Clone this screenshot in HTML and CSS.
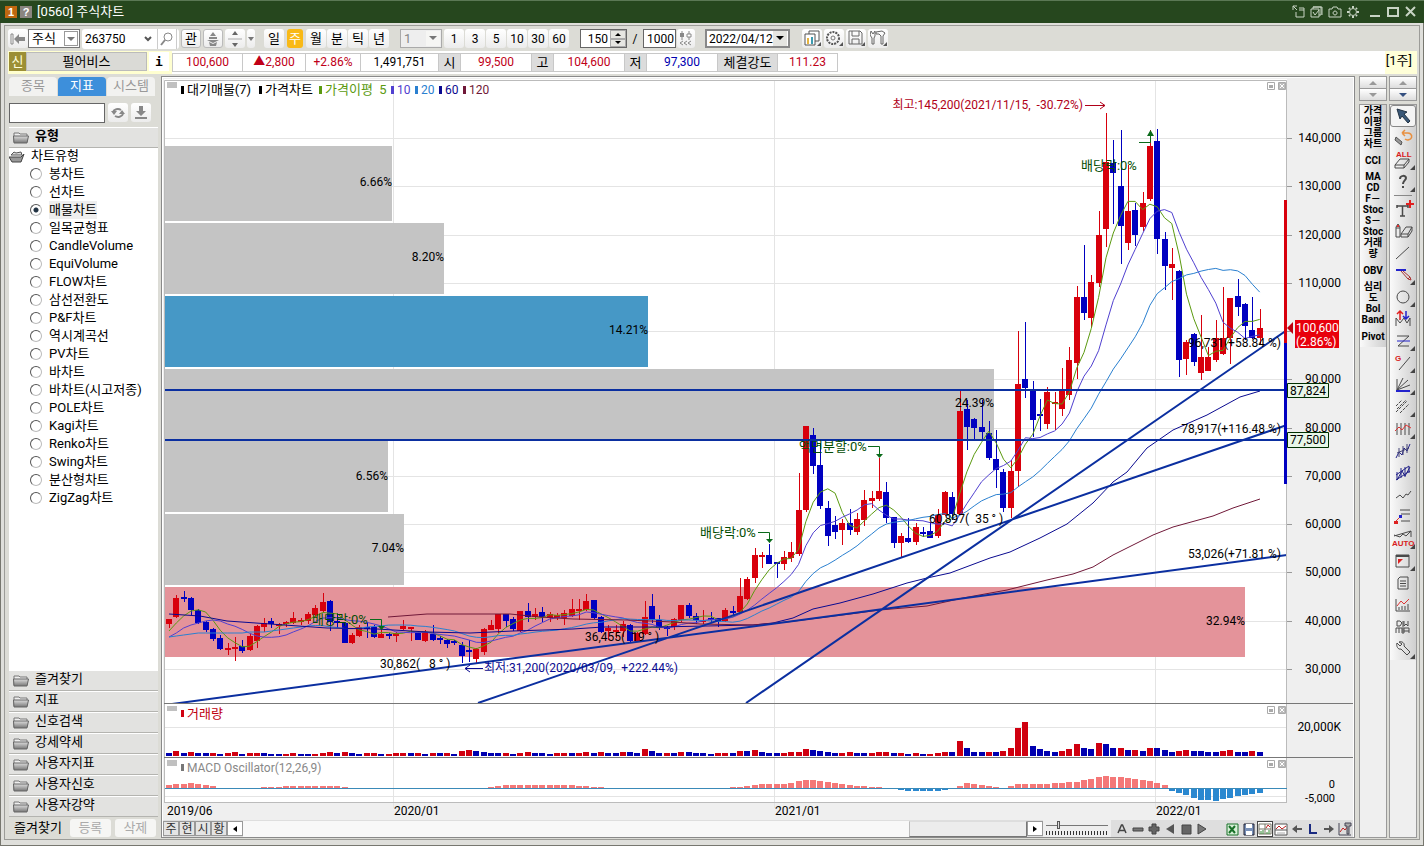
FILE: index.html
```html
<!DOCTYPE html>
<html lang="ko">
<head>
<meta charset="utf-8">
<title>[0560] 주식차트</title>
<link rel="stylesheet" href="styles.css">
</head>
<body>
<div class="window">
<header class="titlebar">
  <span class="badge badge-num">1</span><span class="badge badge-help">?</span>
  <h1 class="title">[0560] 주식차트</h1>
  <div class="title-tools">
    <button class="tbtn" aria-label="분리"><svg width="14" height="14"><path d="M1 1l4 4M1 5V1h4M4 7v5h8V3H7M7 5h5"/></svg></button>
    <button class="tbtn" aria-label="복사"><svg width="14" height="14"><path d="M1 4h8v8H1zM3 4V2h8v8H9M3 2h9v8M3 7l2 3 4-5" /></svg></button>
    <button class="tbtn" aria-label="화면 캡처"><svg width="14" height="14"><path d="M1 4h3l1-2h4l1 2h3v8H1zM7 6a2 2 0 1 0 .1 0z"/></svg></button>
    <button class="tbtn" aria-label="설정"><svg width="14" height="14"><circle cx="7" cy="7" r="3.5"/><path d="M7 1v2M7 11v2M1 7h2M11 7h2M3 3l1 1M10 10l1 1M3 11l1-1M10 4l1-1" stroke-width="2"/></svg></button>
    <span class="title-gap"></span>
    <button class="tbtn" aria-label="최소화"><svg width="14" height="14"><path d="M2 11h10" stroke-width="2"/></svg></button>
    <button class="tbtn" aria-label="최대화"><svg width="14" height="14"><path d="M2 3h10v8H2z" stroke-width="2"/></svg></button>
    <button class="tbtn" aria-label="닫기"><svg width="14" height="14"><path d="M2 2l9 9M11 2l-9 9" stroke-width="2"/></svg></button>
  </div>
</header>
<div class="frame"><div class="inner">

<div class="toolbar">
  <button class="key" aria-label="이전"><svg width="16" height="14"><path d="M1 2h2v10H1z" fill="#fff" stroke="#888"/><path d="M4 7l5-5v3h6v4H9v3z" fill="#888"/></svg></button>
  <span class="selbox w52"><select aria-label="상품"><option>주식</option></select><i class="drop framed"></i></span>
  <div class="code">
    <input aria-label="종목코드" value="263750">
    <button aria-label="종목 목록"><svg width="10" height="8"><path d="M2 2l3 3 3-3" stroke="#555" stroke-width="2" fill="none"/></svg></button>
    <button aria-label="종목 찾기"><svg width="14" height="14"><circle cx="8" cy="5" r="4" fill="none" stroke="#888"/><path d="M5 8l-4 5" stroke="#888" stroke-width="2"/></svg></button>
  </div>
  <button class="key ring">관</button>
  <button class="key ring" aria-label="순위"><svg width="14" height="14"><path d="M7 0l3 4H4zM3 5h8v2H3zM1 8h12l-6 3zM3 10l4 2 4-2-1 4H4z" fill="#888"/></svg></button>
  <button class="key" aria-label="위아래 이동"><svg width="14" height="16"><path d="M7 0l3 4H4zM7 16l3-4H4z" fill="#666"/><path d="M0 8h14" stroke="#aaa"/></svg></button>
  <button class="key slim" aria-label="더보기"><svg width="6" height="4"><path d="M0 0h6L3 4z" fill="#777"/></svg></button>
  <div class="keys periods"><button class="key">일</button><button class="key on">주</button><button class="key">월</button><button class="key">분</button><button class="key">틱</button><button class="key">년</button></div>
  <span class="selbox off w42"><select aria-label="단위" disabled><option>1</option></select><i class="drop"></i></span>
  <div class="keys"><button class="key">1</button><button class="key">3</button><button class="key">5</button><button class="key">10</button><button class="key">30</button><button class="key">60</button></div>
  <div class="spin"><input aria-label="표시 개수" value="150"><span class="spin-keys"><button aria-label="증가"><svg width="6" height="3"><path d="M3 0l3 3H0z"/></svg></button><button aria-label="감소"><svg width="6" height="3"><path d="M0 0h6L3 3z"/></svg></button></span></div>
  <span class="slash">/</span>
  <input class="total" aria-label="전체 개수" value="1000">
  <button class="key candle" aria-label="연속조회"><svg width="14" height="16"><path d="M3 0v9M10 0v9" stroke="#888"/><path d="M1 2h4v4H1z" fill="#888"/><path d="M8 3h4v3H8z" fill="#fff" stroke="#888"/><path d="M4 10l-3 2 3 2M8 10l-3 2 3 2M12 10l-3 2 3 2" stroke="#888" fill="none"/></svg></button>
  <span class="selbox w84"><select aria-label="기준일"><option>2022/04/12</option></select><i class="drop raised"></i></span>
  <div class="tools">
    <button class="key" aria-label="차트 추가"><svg width="17" height="17"><path d="M5 1h10v10H5z" fill="#fff" stroke="#555"/><path d="M1 4h10v11H1z" fill="#fff" stroke="#555"/><path d="M3 8h2v6H3z" fill="#e7b43d"/><path d="M7 7h2v7H7z" fill="#3d9bb0"/><path d="M17 12v4h-4z" fill="#555"/></svg></button>
    <button class="key" aria-label="환경설정"><svg width="17" height="17"><circle cx="7" cy="8" r="6" fill="none" stroke="#555" stroke-width="2" stroke-dasharray="2 1"/><circle cx="7" cy="8" r="2" fill="none" stroke="#777"/><path d="M17 12v4h-4z" fill="#555"/></svg></button>
    <button class="key" aria-label="저장"><svg width="17" height="17"><path d="M1 1h11l2 2v11H1zM4 1v5h7V1M4 14V9h7v5" fill="none" stroke="#666"/><path d="M17 12v4h-4z" fill="#555"/></svg></button>
    <button class="key" aria-label="도구"><svg width="17" height="17"><path d="M1 1l2 3 2-3v5L4 8v6H2V8L0 5zM6 2l6-1 3 2-2 3v8h-2V6L9 4H6z" fill="none" stroke="#666"/><path d="M17 12v4h-4z" fill="#555"/></svg></button>
  </div>
</div>

<div class="quote">
  <div class="issue"><span class="tag">신</span><button class="issue-name">펄어비스</button><button class="info">i</button></div>
  <span class="cell c71 up">100,600</span><span class="cell c63 up">▲2,800</span><span class="cell c55 up">+2.86%</span><span class="cell c78">1,491,751</span>
  <span class="cell c21 cap">시</span><span class="cell c71 up">99,500</span><span class="cell c21 cap">고</span><span class="cell c71 up">104,600</span><span class="cell c21 cap">저</span><span class="cell c71 down">97,300</span><span class="cell c60 cap">체결강도</span><span class="cell c60 up">111.23</span>
  <span class="unit">[1주]</span>
</div>

<main class="main">
<aside class="side">
  <nav class="tabs"><button>종목</button><button class="on">지표</button><button>시스템</button></nav>
  <div class="find"><input aria-label="지표 검색"><button class="key" aria-label="새로고침"><svg width="14" height="14"><path d="M2 6a5 4 0 0 1 8-2M12 8a5 4 0 0 1-8 2" stroke="#888" stroke-width="2" fill="none"/><path d="M0 5h6L3 9zM8 8h6l-3-4z" fill="#888"/></svg></button><button class="key" aria-label="내려받기"><svg width="12" height="14"><path d="M4 0h4v5h3l-5 5-5-5h3zM0 11h12v2H0z" fill="#888"/></svg></button></div>
  <h2 class="group first"><svg class="folder" width="16" height="13"><use href="#folder"/></svg>유형</h2>
  <div class="tree">
    <p class="root"><svg width="16" height="13"><path d="M2 5l3-3 2 1 5-1 1 3z" fill="#ddd" stroke="#555"/><path d="M0 7h12l3-3-3 8H3z" fill="#999" stroke="#444"/></svg>차트유형</p>
    <label><input type="radio" name="kind">봉차트</label>
    <label><input type="radio" name="kind">선차트</label>
    <label><input type="radio" name="kind" checked><span class="picked">매물차트</span></label>
    <label><input type="radio" name="kind">일목균형표</label>
    <label><input type="radio" name="kind">CandleVolume</label>
    <label><input type="radio" name="kind">EquiVolume</label>
    <label><input type="radio" name="kind">FLOW차트</label>
    <label><input type="radio" name="kind">삼선전환도</label>
    <label><input type="radio" name="kind">P&amp;F차트</label>
    <label><input type="radio" name="kind">역시계곡선</label>
    <label><input type="radio" name="kind">PV차트</label>
    <label><input type="radio" name="kind">바차트</label>
    <label><input type="radio" name="kind">바차트(시고저종)</label>
    <label><input type="radio" name="kind">POLE차트</label>
    <label><input type="radio" name="kind">Kagi차트</label>
    <label><input type="radio" name="kind">Renko차트</label>
    <label><input type="radio" name="kind">Swing차트</label>
    <label><input type="radio" name="kind">분산형차트</label>
    <label><input type="radio" name="kind">ZigZag차트</label>
  </div>
  <div class="groups">
    <button class="group"><svg class="folder" width="16" height="13"><use href="#folder"/></svg>즐겨찾기</button>
    <button class="group"><svg class="folder" width="16" height="13"><use href="#folder"/></svg>지표</button>
    <button class="group"><svg class="folder" width="16" height="13"><use href="#folder"/></svg>신호검색</button>
    <button class="group"><svg class="folder" width="16" height="13"><use href="#folder"/></svg>강세약세</button>
    <button class="group"><svg class="folder" width="16" height="13"><use href="#folder"/></svg>사용자지표</button>
    <button class="group"><svg class="folder" width="16" height="13"><use href="#folder"/></svg>사용자신호</button>
    <button class="group"><svg class="folder" width="16" height="13"><use href="#folder"/></svg>사용자강약</button>
  </div>
  <div class="fav"><span>즐겨찾기</span><button disabled>등록</button><button disabled>삭제</button></div>
</aside>

<section class="panel">
  <svg class="chart" viewBox="163 78 1190 742" preserveAspectRatio="xMinYMin meet" role="img" aria-label="펄어비스 주간 차트">
    <defs>
      <linearGradient id="fg" x2="0" y2="1"><stop offset="0" stop-color="#ddd"/><stop offset="1" stop-color="#777"/></linearGradient>
      <g id="folder"><path d="M1 11V2h5l1 1h7v8z" fill="#eee" stroke="#777"/><path d="M1 12l-.5-7h15L14 12z" fill="url(#fg)" stroke="#666"/></g>
      <clipPath id="price"><rect x="164" y="80" width="1123" height="623"/></clipPath>
      <g id="panebtn"><path d="M.5.5h7v7h-7zM11.500.5h7v7h-7z" fill="#fff" stroke="#aaa"/><path d="M2 3h4v3H2z" fill="#aaa"/><path d="M12 1h6v6h-6z" fill="#bbb"/><path d="M13 2l4 4M17 2l-4 4" stroke="#fff"/></g>
    </defs>
    <rect x="163" y="78" width="1190" height="742" fill="#efefef"/>
    <rect x="164" y="79" width="1123" height="723" fill="#fff"/>
    <g id="grid" class="grid"></g>
    <g id="profile"></g>
    <g class="ctext" text-anchor="end">
      <text x="392" y="186">6.66%</text><text x="444" y="261">8.20%</text><text x="648" y="334">14.21%</text>
      <text x="388" y="480">6.56%</text><text x="404" y="552">7.04%</text><text x="1245" y="625">32.94%</text>
    </g>
    <g id="candles" shape-rendering="crispEdges"></g>
    <g id="averages" class="avg"></g>
    <g class="trend" clip-path="url(#price)">
      <path d="M164 390H1287M164 440H1287M172 704L1287 555M478 703L1287 425M746 703L1287 330"/>
    </g>
    <g class="note">
      <text x="799" y="451">액면분할:0%</text><text x="700" y="537">배당락:0%</text><text x="312" y="624">배당락:0%</text><text x="1081" y="170">배당락:0%</text>
      <path d="M868 446.500h11.500v10M758 532.500h11.500v10M370 619.500h11.500v9M1139 142.500h11.500v-10"/>
      <path class="tip" d="M876 454h7l-3.500 4zM766 539h7l-3.500 4zM378 626h7l-3.500 4zM1147 136h7l-3.500-6z"/>
    </g>
    <g class="ctext">
      <text x="994" y="407" text-anchor="end">24.39%</text>
      <text x="1281" y="347" text-anchor="end">96,731(+58.84 %)</text>
      <text x="1281" y="433" text-anchor="end">78,917(+116.48 %)</text>
      <text x="1281" y="558" text-anchor="end">53,026(+71.81 %)</text>
      <text x="929" y="523">60,897(&#160; 35 ° )</text><text x="585" y="641">36,455(&#160; 19 ° )</text>
      <text x="380" y="668">30,862(&#160; &#160;8 ° )</text>
      <text x="1083" y="109" fill="#b00018" text-anchor="end">최고:145,200(2021/11/15,&#160; -30.72%)</text>
      <text x="484" y="672" fill="#0a0a90">최저:31,200(2020/03/09,&#160; +222.44%)</text>
    </g>
    <path d="M1085 105.500h20M1100 102l5 3.500-5 3.500" fill="none" stroke="#b00018"/>
    <path d="M465 668.500h18M470 665l-5 3.500 5 3.500" fill="none" stroke="#0a0a90"/>
    <g class="legend">
      <path d="M167 82h10v6h-10zM167 706h10v5h-10zM167 760h10v6h-10z" fill="#c0c0c0"/>
      <path d="M181 86h3v8h-3zM259 86h3v8h-3z"/><path d="M319 86h3v8h-3z" fill="#5b9a10"/><path d="M391 86h3v8h-3z" fill="#5040d0"/><path d="M415 86h3v8h-3z" fill="#2a80d0"/><path d="M439 86h3v8h-3z" fill="#0a0a90"/><path d="M463 86h3v8h-3z" fill="#701838"/>
      <text x="187" y="94">대기매물(7)</text><text x="265" y="94">가격차트</text><text x="325" y="94" fill="#5b9a10">가격이평&#160; 5</text>
      <g class="ctext"><text x="397" y="94" fill="#5040d0">10</text><text x="421" y="94" fill="#2a80d0">20</text><text x="445" y="94" fill="#0a0a90">60</text><text x="469" y="94" fill="#701838">120</text></g>
      <path d="M181 710h3v7h-3z" fill="#d00010"/><text x="187" y="718" fill="#c00010">거래량</text>
      <path d="M181 764h3v7h-3z" fill="#777"/><text x="187" y="772" fill="#888" class="ctext">MACD Oscillator(12,26,9)</text>
    </g>
    <use href="#panebtn" x="1267" y="82"/><use href="#panebtn" x="1267" y="706"/><use href="#panebtn" x="1267" y="760"/>
    <path d="M164.500 802V80.500H1286.500V802" fill="none" stroke="#bbb"/>
    <path d="M164 703.500H1353M164 757.500H1353" stroke="#777"/><path d="M164 802.500H1287" stroke="#bbb"/>
    <g id="bars" shape-rendering="crispEdges"></g>
    <path d="M1284 200h3v143h-3z" fill="#d8000c"/><path d="M1284 343h3v141h-3z" fill="#0000c0"/>
    <g id="axis" class="ctext" text-anchor="end"></g>
    <g class="ctext"><text x="167" y="815">2019/06</text><text x="394" y="815">2020/01</text><text x="775" y="815">2021/01</text><text x="1156" y="815">2022/01</text></g>
    <path d="M1287 328l6-6v12z" fill="#c00010"/><path d="M1295 320h44v28h-44z" fill="#e8000c"/>
    <g class="ctext"><text x="1296" y="332" fill="#fff">100,600</text><text x="1296" y="346" fill="#fff">(2.86%)</text>
    <path d="M1287.500 383.500h41v14h-41zM1287.500 432.500h41v15h-41z" fill="#e8f6e8" stroke="#003000"/>
    <text x="1290" y="395">87,824</text><text x="1290" y="444">77,500</text></g>
  </svg>
  <div class="bottom">
    <button class="mini">주</button><button class="mini">현</button><button class="mini">시</button><button class="mini">황</button><button class="mini arrow" aria-label="왼쪽"><svg width="4" height="6"><path d="M4 0v6L0 3z"/></svg></button>
    <div class="track"><span class="thumb"></span></div><button class="mini arrow" aria-label="오른쪽"><svg width="4" height="6"><path d="M0 0v6l4-3z"/></svg></button>
    <div class="zoombar"><input type="range" aria-label="확대" min="0" max="100" value="18"><span class="ticks"></span></div>
    <div class="play">
      <button aria-label="글자"><svg width="16" height="16"><path d="M4 12l3.500-8h1l3.500 8M5.500 9.500h5" fill="none" stroke="#444" stroke-width="1.500"/></svg></button>
      <button aria-label="축소"><svg width="16" height="16"><path d="M3 7h10v3H3z" fill="#777" stroke="#444"/></svg></button>
      <button aria-label="확대"><svg width="16" height="16"><path d="M6 3h4v3h3v4h-3v3H6v-3H3V6h3z" fill="#666" stroke="#444"/></svg></button>
      <button aria-label="뒤로"><svg width="16" height="16"><path d="M12 3v10L4 8z" fill="#555"/></svg></button>
      <button aria-label="정지"><svg width="16" height="16"><path d="M4 4h9v9H4z" fill="#666" stroke="#444"/></svg></button>
      <button aria-label="앞으로"><svg width="16" height="16"><path d="M4 3v10l8-5z" fill="#777" stroke="#444"/></svg></button>
    </div>
    <div class="play last">
      <button aria-label="엑셀"><svg width="16" height="16"><path d="M2 3h11v11H2z" fill="#d8f0d8" stroke="#187028"/><path d="M4 5l6 7M10 5l-6 7" stroke="#187028" stroke-width="2"/></svg></button>
      <button aria-label="저장"><svg width="16" height="16"><path d="M3 3h10v11H3z" fill="#7890b8" stroke="#223"/><path d="M5 3h6v4H5zM5 10h6v4H5z" fill="#fff"/></svg></button>
      <button class="sel" aria-label="차트 보기"><svg width="14" height="14"><path d="M1 2h12v10H1zM7 2v10M1 7h12" fill="#fff" stroke="#776"/><path d="M8 6l2-3 2 2" stroke="#c02020" fill="none"/><path d="M3 12v-3M5 12v-4M9 12v-2M11 12v-4" stroke="#383"/></svg></button>
      <button aria-label="지표 보기"><svg width="16" height="16"><path d="M2 3h12v11H2zM2 9h12" fill="#fff" stroke="#555"/><path d="M3 8l3-3 3 3 4-3" stroke="#c02020" fill="none"/><path d="M4 12h8" stroke="#aaa"/></svg></button>
      <button aria-label="이전"><svg width="16" height="16"><path d="M3 8l5-4v3h5v2H8v3z" fill="#555"/></svg></button>
      <button aria-label="로그"><svg width="16" height="16"><path d="M5 3v9h7" stroke="#1a2a80" stroke-width="2" fill="none"/></svg></button>
      <button aria-label="다음"><svg width="16" height="16"><path d="M13 8L8 4v3H3v2h5v3z" fill="#555"/></svg></button>
      <button aria-label="차트 도구"><svg width="16" height="16"><path d="M2 2v12h12" stroke="#445" fill="none"/><path d="M3 11l3-4 2 2 3-4" stroke="#c02020" fill="none"/><path d="M8 2h6v3h-2v8h-2V5H8z" fill="#aaa" stroke="#445"/></svg></button>
    </div>
  </div>
</section>

<div class="rail">
  <div class="pager"><button aria-label="위로"><svg width="8" height="4"><path d="M4 0l4 4H0z" fill="#999"/></svg></button><button aria-label="아래로"><svg width="8" height="4"><path d="M0 0h8L4 4z" fill="#999"/></svg></button></div>
  <div class="strip names"><div class="ribbon"><button>가격<br>이평</button><button>그룹<br>차트</button><button>CCI</button><button>MA<br>CD</button><button>F－<br>Stoc</button><button>S－<br>Stoc</button><button>거래<br>량</button><button>OBV</button><button>심리<br>도</button><button>Bol<br>Band</button><button>Pivot</button></div></div>
</div>
<div class="rail">
  <div class="pager"><button aria-label="위로"><svg width="8" height="4"><path d="M4 0l4 4H0z" fill="#999"/></svg></button><button aria-label="아래로"><svg width="8" height="4"><path d="M0 0h8L4 4z" fill="#345080"/></svg></button></div>
  <div class="strip"><div class="ribbon icons">
    <button class="active" aria-label="선택"><svg viewBox="0 0 24 20"><path d="M6 3l10 3-3 2 6 7-2 2-6-7-2 3z" fill="#3a5878" stroke="#234"/></svg></button>
    <button aria-label="되돌리기"><svg viewBox="0 0 24 20"><path d="M11 5l3-3M11 5l3 3M11 5h5a4 3.500 0 1 1-2 6" stroke="#e89040" stroke-width="1.500"/><path d="M5 9l6 5-1 3-6-5z" fill="#999" stroke="#555"/></svg></button>
    <button aria-label="전체 지우기"><svg viewBox="0 0 24 20"><text x="5" y="7" class="tiny">ALL</text><path d="M4 15l5-6h9l-5 6zM4 15v3h9v-3M13 18l5-6V9"/><path d="M24 15v5h-5z" class="cr"/></svg></button>
    <button aria-label="도움말"><svg viewBox="0 0 24 20"><path d="M9 7c0-4 6-4 6-1 0 2-3 3-3 6M12 14v2" stroke-width="2"/><path d="M24 15v5h-5z" class="cr"/></svg></button>
    <hr>
    <button aria-label="글자"><svg viewBox="0 0 24 20"><path d="M6 7h11M6 6v3M17 6v3M11.500 7v10M9 17h5" stroke-width="1.500"/><path d="M19 1v8M15 5h8" stroke="#e02020" stroke-width="2"/></svg></button>
    <button aria-label="그리기 지우개"><svg viewBox="0 0 24 20"><path d="M5 6l2-3 2 3v10H5zM5 7h4M10 13l5-7h6l-4 7zM10 13v3h7v-3M17 16l4-6V6"/><path d="M6 4h2v2H6z" fill="#d33" stroke="none"/></svg></button>
    <button aria-label="추세선"><svg viewBox="0 0 24 20"><path d="M5 16L18 4"/></svg></button>
    <button aria-label="수평선"><svg viewBox="0 0 24 20"><path d="M5 5h10" stroke="#22c" stroke-width="2"/><path d="M10 6l7 8 2-2-7-6M17 14l3 1-1-3" stroke="#a33"/><path d="M24 15v5h-5z" class="cr"/></svg></button>
    <button aria-label="원"><svg viewBox="0 0 24 20"><circle cx="12" cy="10" r="6"/><path d="M24 15v5h-5z" class="cr"/></svg></button>
    <button aria-label="변곡점"><svg viewBox="0 0 24 20"><path d="M5 17V9l4 5 4-5 3 5 3-5v8"/><path d="M9 11V3M6 5l3-3 3 3" stroke="#e02020" stroke-width="1.500"/><path d="M15 2v7M12 7l3 3 3-3" stroke="#22c" stroke-width="1.500"/></svg></button>
    <button aria-label="채널"><svg viewBox="0 0 24 20"><path d="M6 5h12L7 15h11"/><path d="M6 10h13" stroke="#22c"/><path d="M24 15v5h-5z" class="cr"/></svg></button>
    <button aria-label="갠"><svg viewBox="0 0 24 20"><path d="M8 17L19 4"/><text x="4" y="8" class="tiny">G</text><path d="M24 15v5h-5z" class="cr"/></svg></button>
    <button aria-label="팬"><svg viewBox="0 0 24 20"><path d="M6 15V4M6 15l6-12M6 15L17 5M6 15l13-5"/><path d="M5 16h14" stroke="#22c" stroke-width="2"/><path d="M24 15v5h-5z" class="cr"/></svg></button>
    <button aria-label="평행선"><svg viewBox="0 0 24 20"><path d="M5 9l6-6M5 15L16 4M9 16l9-9M6 12l9-9" stroke-dasharray="3 1"/><path d="M24 15v5h-5z" class="cr"/></svg></button>
    <button aria-label="주기선"><svg viewBox="0 0 24 20"><path d="M6 4v12M10 4v12M14 4v12M18 4v12"/><path d="M4 12l4-4 3 3 4-5 5 3" stroke="#d33"/><path d="M24 15v5h-5z" class="cr"/></svg></button>
    <button aria-label="파동"><svg viewBox="0 0 24 20"><path d="M5 17l3-6 3 3 2-7 3 3 3-7" stroke="#228"/><path d="M8 7v9M12 5v9M16 3v9M6 12l12-5" stroke="#447"/></svg></button>
    <button aria-label="파동 채널"><svg viewBox="0 0 24 20"><path d="M5 12L18 3M5 17L19 8M6 9v8M10 5v10M14 4v10M18 3v7M6 17l5-9 3 5 5-9" stroke="#228"/></svg></button>
    <button aria-label="지그재그"><svg viewBox="0 0 24 20"><path d="M5 13l4-3 3 3 3-4 2 1 3-4"/></svg></button>
    <button aria-label="단계선"><svg viewBox="0 0 24 20"><path d="M9 3h10M10 7h9M10 14h9"/><path d="M4 15l6-6" stroke="#d33"/><path d="M3 14h4v3H3z" fill="#d22" stroke="none"/><path d="M8 8h3v3H8z" fill="#22c" stroke="none"/></svg></button>
    <button aria-label="자동 추세"><svg viewBox="0 0 24 20"><path d="M3 6l6 2 3-3 3 2 5-5v6M3 7l17-5"/><text x="1" y="17" class="tiny">AUTO</text><path d="M24 15v5h-5z" class="cr"/></svg></button>
    <button aria-label="창"><svg viewBox="0 0 24 20"><path d="M5 4h13v12H5z"/><path d="M5 5h13" stroke-width="2"/><path d="M7 8h5l-5 5z" fill="#d22" stroke="none"/><path d="M24 15v5h-5z" class="cr"/></svg></button>
    <button aria-label="문서"><svg viewBox="0 0 24 20"><path d="M9 4h8v12H7V6zM9 8h6M9 10.500h6M9 13h6"/></svg></button>
    <button aria-label="차트"><svg viewBox="0 0 24 20"><path d="M5 4v12h14M8 15v-3M11 15v-4M14 15v-4M17 15v-6"/><path d="M6 11l4-5 3 3 5-5" stroke="#d33"/></svg></button>
    <button aria-label="일주월분"><svg viewBox="0 0 24 20"><path d="M6 4h3l2 2-2 3H6zM13 4v5l2-2 2 2V4M5 11v5M8 11v5M11 11v5M5 11h6M13 11h5M13 11v5M18 11v5M13 14h5M12 4v13" /></svg></button>
    <button aria-label="설정"><svg viewBox="0 0 24 20"><path d="M6 4l3 3 2-2-3-2c3-1 6 1 5 4l6 6-3 3-6-6c-3 1-5-3-4-6z"/><path d="M24 15v5h-5z" class="cr"/></svg></button>
  </div></div>
</div>
</main>
</div></div>
</div>
<script src="chart.js"></script>
</body>
</html>
```
FILE: styles.css
```css
* { box-sizing: border-box; }
body { margin: 0; font: 12px/16px Roboto, "Noto Sans CJK KR", sans-serif; color: #000; background: #dcdcd6; }
button, input, select { font: inherit; color: inherit; margin: 0; padding: 0; border: 0; border-radius: 0; background: none; }
button { display: flex; align-items: center; justify-content: center; flex: none; }
svg { flex: none; }
.window { display: flex; flex-direction: column; min-height: 100vh; }

.titlebar { display: flex; align-items: center; gap: 3px; height: 23px; padding: 0 6px 0 5px; background: #26471e; border-top: 1px solid #5b7855; color: #fff; }
.badge { width: 12px; height: 12px; font: bold 11px/12px "Liberation Sans", sans-serif; text-align: center; }
.badge-num { background: #c06810; }
.badge-help { background: #8a8580; }
.title { margin: 0 auto 0 2px; font-size: 13px; font-weight: 400; }
.title-tools { display: flex; gap: 4px; }
.title-gap { width: 0; }
.tbtn svg { fill: none; stroke: #c8d4c4; }

.frame { flex: 1; display: flex; padding: 2px 3px 5px; border: solid #77776f; border-width: 0 1px 1px; background: #dfdfdb; }
.inner { flex: 1; min-width: 0; display: flex; flex-direction: column; padding-bottom: 1px; border: 1px solid #9c9c98; background: #dcdcd6; }

.toolbar { display: flex; align-items: center; height: 25px; padding-left: 3px; }
.key { width: 20px; height: 19px; border-radius: 3px; background: linear-gradient(#fff, #ececec); font-size: 13px; }
.key.ring { margin-right: 2px; border: 1px solid #bbb; }
.key.slim { width: 8px; margin-left: 2px; }
.key.on { width: 16px; margin: 0 2px; background: #f9b916; color: #fff; }
.selbox { position: relative; display: flex; height: 19px; border: 1px solid #777; background: #fff; }
.selbox select { flex: 1; appearance: none; padding-left: 3px; line-height: 16px; font-size: 13px; opacity: 1; }
.drop { position: absolute; right: 1px; top: 1px; width: 14px; height: 15px; pointer-events: none; }
.drop::after { content: ""; position: absolute; left: 3px; top: 5px; border: 4px solid transparent; border-top-color: #777; border-bottom: 0; }
.drop.framed { border: 1px solid #999; }
.drop.framed::after { left: 2px; }
.drop.raised { top: 0; background: #e4e4e0; }
.drop.raised::after { border-top-color: #000; }
.w52 { width: 52px; margin-right: 2px; }
.w42 { width: 42px; margin: 0 2px 0 11px; }
.w84 { width: 85px; margin: 0 12px 0 10px; border: 2px solid #888; }
.w84 select { padding-left: 2px; font-size: 12px; }
.off { background: #eee; border-color: #aaa; color: #888; }
.off .drop { background: #f6f6f4; }
.code { display: flex; width: 97px; height: 20px; margin-right: 2px; background: #fff; border-radius: 3px; }
.code input { width: 57px; padding-left: 3px; }
.code button { width: 19px; border-right: 1px solid #ccc; }
.keys { display: flex; gap: 1px; }
.keys .key { font-size: 12px; }
.periods { margin-left: 9px; }
.periods .key { font-size: 13px; }
.spin { display: flex; width: 47px; height: 19px; margin-left: 11px; border: 1px solid #666; background: #fff; }
.spin input { width: 29px; text-align: right; padding-right: 2px; }
.spin-keys { display: flex; flex-direction: column; width: 16px; background: #e6e6e2; }
.spin-keys button { flex: 1; border: 1px solid #aaa; }
.slash { width: 16px; text-align: center; }
.total { width: 33px; height: 19px; padding-left: 3px; border: 1px solid #666; background: #fff; }
.candle { width: 18px; margin-left: 1px; }
.tools { display: flex; gap: 2px; }

.quote { display: flex; height: 23px; margin: 0 2px 0 3px; background: #fff; }
.issue { display: flex; width: 164px; padding: 1px; background: #ffffd0; }
.tag { width: 17px; height: 19px; background: #9c8f35; color: #ffd; font-size: 13px; line-height: 19px; text-align: center; }
.issue-name { flex: 1; height: 19px; margin-right: 2px; background: #dadad6; border: 1px solid #bbb; font-size: 13px; }
.info { width: 20px; height: 19px; margin-right: 2px; background: #fff; font: bold 13px/18px "DejaVu Sans Mono", monospace; }
.cell { height: 19px; margin-top: 2px; line-height: 17px; text-align: center; border: 1px solid #c8c8c8; border-left: 0; }
.issue + .cell { border-left: 1px solid #c8c8c8; }
.cap { background: #dcdcdc; font-size: 13px; }
.up { color: #c00018; }
.down { color: #0000b0; }
.c71 { width: 71px; } .c63 { width: 63px; } .c55 { width: 55px; } .c78 { width: 78px; } .c21 { width: 22px; } .c60 { width: 60px; }
.unit { margin-left: auto; padding: 0 5px 0 1px; background: #ffffd8; font-size: 13px; line-height: 20px; }

.main { flex: 1; display: flex; margin-top: 2px; padding: 0 2px 0 4px; }
.side { width: 149px; margin-right: 3px; display: flex; flex-direction: column; font: 13px/18px Roboto, "Noto Sans CJK KR", sans-serif; }
.tabs { display: flex; gap: 1px; height: 19px; margin-top: 1px; }
.tabs button { width: 48px; padding-bottom: 2px; border-radius: 4px 4px 0 0; background: #f2f2f0; color: #999; }
.tabs .on { background: #3d8fdb; color: #fff; }
.find { display: flex; gap: 3px; margin: 7px 0 4px; }
.find input { width: 96px; height: 20px; border: 1px solid #666; background: #fff; }
.group { display: flex; align-items: center; justify-content: flex-start; gap: 6px; width: 100%; height: 21px; margin: 0; padding: 0 0 3px 4px; border-top: 1px solid #fff; border-bottom: 1px solid #b4b4b0; background: #e2e2e0; }
.first { font-size: 13px; font-weight: 700; }
.folder { display: block; margin-top: 3px; }
.tree { flex: 1; background: #fff; }
.root { display: flex; align-items: center; gap: 6px; height: 18px; margin: 0; padding-bottom: 2px; }
.tree label { display: flex; align-items: center; gap: 7px; height: 18px; padding: 0 0 2px 21px; }
.tree input { appearance: none; width: 12px; height: 12px; border: 1px solid #555; border-right-color: #bbb; border-bottom-color: #bbb; border-radius: 50%; background: #fff; }
.tree input:checked { background: radial-gradient(circle, #234 0 2px, #fff 3px); }
.picked { background: #eee; }
.fav { display: flex; align-items: center; gap: 4px; height: 21px; padding-left: 5px; }
.fav span { margin-right: 4px; }
.fav button { width: 41px; height: 18px; border-radius: 3px; background: #f6f6f4; color: #aaa; }

.panel { flex: 1; min-width: 0; display: flex; flex-direction: column; margin-right: 4px; padding: 1px 1px 0; border: 1px solid #8a8a8a; background: #fff; }
.chart { flex: 1 1 0; width: 100%; min-height: 0; display: block; }
.note { font-size: 13px; fill: #044d04; }
.note path { fill: none; stroke: #0a6a1a; }
.note .tip { fill: #0a6a1a; stroke: none; }
.legend { font-size: 13px; }
.ctext { font-size: 12px; }
.ctext .low { font-size: 11px; }
.grid { stroke: #e4e4e4; }
.avg { fill: none; stroke-width: 1; }
.trend { fill: none; stroke: #0b2fa0; stroke-width: 2; }

.bottom { display: flex; align-items: center; height: 17px; background: #dedede; }
.mini { width: 16px; height: 15px; border: 1px solid #999; background: #e4e4e4; color: #333; }
.arrow { background: #fff; }
.track { flex: 1; display: flex; justify-content: flex-end; height: 16px; background: #f8f8f8; }
.thumb { width: 15%; border: 1px solid #777; border-left-color: #bbb; border-top-color: #ddd; background: #ececec; }
.zoombar { display: flex; flex-direction: column; width: 68px; height: 17px; padding: 1px 3px; background: #eee; }
.zoombar input { appearance: none; width: 62px; height: 8px; background: linear-gradient(#777, #777) center / 100% 1px no-repeat; }
.zoombar input::-webkit-slider-thumb { appearance: none; width: 3px; height: 8px; background: #ddd; border: 1px solid #555; }
.ticks { height: 4px; margin-top: 2px; background: repeating-linear-gradient(90deg, #333 0 1px, transparent 1px 3px); }
.play { display: flex; margin-left: 3px; }
.play.last { margin-left: 15px; }
.play .sel { border: 1px solid #444; width: 16px; height: 16px; background: #fff; }

.rail { width: 28px; margin-right: 2px; display: flex; flex-direction: column; gap: 3px; }
.rail:last-child { margin-right: 0; }
.pager { height: 25px; display: flex; flex-direction: column; border: 1px solid #999; }
.pager button { flex: 1; background: linear-gradient(#fff, #ddd); border-bottom: 1px solid #999; }
.pager button:last-child { border-bottom: 0; }
.strip { flex: 1; border: 1px solid #999; background: #efefef; }
.ribbon { background: linear-gradient(90deg, #fafafa, #cfcfcf); }
.ribbon button { width: 100%; height: 22px; }
.names button { font: bold 10px/11px Roboto, "Noto Sans CJK KR", sans-serif; }
.icons svg { width: 24px; height: 20px; fill: none; stroke: #4a4a4a; }
.icons .cr { fill: #444; stroke: none; }
.icons .active { border: 1px solid #888; border-radius: 3px; background: #f4f4f4; }
.icons hr { height: 1px; margin: 2px 4px; border: 0; background: #888; }
.tiny { font: bold 8px "Liberation Sans", sans-serif; fill: #d82020; stroke: none; }
```
FILE: chart.js
```js
const NS = 'http://www.w3.org/2000/svg';
const X0 = 169, STEP = 7.32;
const layer = id => document.getElementById(id);
const xAt = i => X0 + STEP * i;
function draw(parent, tag, attrs, text) {
  const node = document.createElementNS(NS, tag);
  for (const key in attrs) node.setAttribute(key, attrs[key]);
  if (text) node.textContent = text;
  parent.appendChild(node);
}

/* Each candle: direction, body top, body bottom, high, low */
const candles = `r619,624,619,628 r598,617,595,618 b597,599,591,602 b598,610,597,615 b610,623,609,624 b622,630,621,632 b629,639,628,641 b638,649,635,650 r648,650,643,655 r647,648,637,661
b646,651,640,653 r636,650,634,651 r626,641,625,648 r623,627,618,632 b621,624,618,628 r624,626,623,634 r622,624,621,627 r618,623,612,624 r620,621,618,625 r614,621,612,624
r608,615,605,617 r602,611,593,612 b601,622,600,631 b621,623,613,628 b623,643,622,643 r635,643,633,644 r627,636,625,637 b627,629,622,638 b627,637,625,638 r634,638,627,638
b634,636,633,639 r633,636,632,642 r626,629,620,630 r627,629,627,641 b633,640,632,640 r632,641,630,642 b634,640,625,641 b638,640,636,644 b640,644,639,648 b641,643,640,645
b645,656,642,663 b650,652,640,662 r649,659,648,663 r629,652,628,655 r625,630,620,630 r614,629,614,633 b614,621,614,627 b619,629,617,631 r611,631,611,632 b611,617,603,622
r614,617,608,620 b612,617,607,622 r614,618,612,622 r615,618,613,620 r613,618,610,625 r609,616,599,617 r609,611,599,620 r601,610,594,611 b600,618,600,619 b617,632,616,633
r628,631,625,640 r630,632,625,638 r624,631,621,637 b625,641,624,642 r633,641,632,642 r617,634,601,635 b606,620,594,623 b620,628,615,630 b627,628,626,636 r619,627,618,630
r605,620,605,622 b605,616,603,618 b616,620,613,624 r620,622,610,624 b618,620,612,623 b618,622,618,627 r610,621,608,622 b611,613,606,616 r596,612,578,613 r579,599,577,600
r555,578,548,583 r555,557,552,568 b555,564,544,564 b562,564,562,578 r557,564,551,570 r552,558,542,562 r510,554,473,556 r426,510,426,512 b435,466,428,474 b465,506,444,509
b508,536,501,546 b525,532,516,539 r523,530,519,545 b523,530,509,535 r519,532,513,535 r500,520,490,526 r498,501,491,508 r491,499,458,501 b492,518,482,523 b517,543,517,548
r536,543,533,557 b538,542,518,543 r527,542,523,545 b532,534,527,537 b531,538,522,538 r515,536,509,538 r492,515,491,516 b497,514,492,520 r411,514,390,515 b409,427,400,450
b419,428,418,439 b427,432,400,439 b433,458,421,460 b459,470,430,488 b472,508,469,512 r471,508,460,518 r384,471,331,487 b379,388,322,398 b390,420,381,437 b414,416,399,431
r392,424,387,429 r402,403,392,430 r390,409,368,416 r360,395,347,400 r297,363,286,379 b297,313,245,320 r282,318,275,328 r235,283,211,287 r162,229,113,247 b163,173,140,224
b186,226,130,264 r211,243,165,250 b210,235,203,246 r203,227,192,231 r146,199,130,201 b141,239,129,254 b239,266,232,290 r264,268,248,300 b271,360,270,377 r342,359,340,375
b334,362,333,366 r357,373,315,380 r357,371,347,371 r338,360,320,362 r338,354,287,355 r298,338,298,364 b296,307,279,316 b304,326,303,340 b330,338,297,339 r328,338,309,345`
  .split(/\s+/).map(s => ({ up: s[0] === 'r', v: s.slice(1).split(',').map(Number) }));

/* Grid and price axis */
for (let i = 0; i < 12; i++) {
  const y = Math.round(138 + i * 48.25);
  draw(layer('grid'), 'path', { d: `M165 ${y + .5}H1287` });
  draw(layer('grid'), 'path', { d: `M1287 ${y + .5}h5`, stroke: '#999' });
  if (i !== 4) draw(layer('axis'), 'text', { x: 1341, y: y + 4 }, (140 - i * 10) + ',000');
}
draw(layer('axis'), 'text', { x: 1341, y: 731 }, '20,000K');
draw(layer('axis'), 'text', { x: 1335, y: 788, class: 'low' }, '0');
draw(layer('axis'), 'text', { x: 1335, y: 802, class: 'low' }, '-5,000');
draw(layer('grid'), 'path', { d: 'M165 727.5H1287M165 796.5H1287M393.5 80V808M774.5 80V808M1155.5 80V808' });

/* Volume by price */
[[392, 146, 75, '#c4c4c4'], [444, 223, 71, '#c4c4c4'], [648, 296, 71, '#4698c6'], [994, 369, 70, '#c4c4c4'],
 [388, 441, 71, '#c4c4c4'], [404, 514, 71, '#c4c4c4'], [1245, 587, 70, '#e4939a']]
  .forEach(([right, y, height, fill]) => draw(layer('profile'), 'rect', { x: 165, y, width: right - 165, height, fill }));

/* Candles */
candles.forEach(({ up, v: [top, bottom, high, low] }, i) => {
  const fill = up ? '#d8000c' : '#0000c0', x = Math.round(xAt(i));
  draw(layer('candles'), 'rect', { x, y: high, width: 1, height: Math.max(1, low - high), fill });
  draw(layer('candles'), 'rect', { x: x - 3, y: top, width: 6, height: Math.max(2, bottom - top), fill });
});

/* Moving averages */
const closes = candles.map(c => c.up ? c.v[0] : c.v[1]);
function average(n, lead, stroke) {
  const points = closes.map((_, i) => {
    const y = i < n - 1 ? lead[Math.min(i, lead.length - 1)]
      : closes.slice(i - n + 1, i + 1).reduce((a, b) => a + b) / n;
    return xAt(i).toFixed(1) + ',' + y.toFixed(1);
  });
  draw(layer('averages'), 'polyline', { points: points.join(' '), stroke });
}
average(5, [631, 623, 616, 611], '#5b9a10');
average(10, [637, 633, 628, 625, 623, 621, 620, 621, 624], '#5040d0');
average(20, [637, 636, 635, 634, 633, 633, 633, 633, 633, 633, 633, 632, 632, 632, 631, 630, 629, 628, 627], '#2a80d0');
draw(layer('averages'), 'polyline', { stroke: '#0a0a90', points: '169,614 200,616 227,621 270,624 327,628 377,629 427,632 470,633 513,631 573,629 603,627 657,627 707,626 753,625 773,623 793,618 813,609 840,603 873,594 907,583 927,578 950,573 990,558 1010,552 1040,538 1067,524 1093,503 1113,482 1127,472 1147,448 1173,430 1207,415 1240,397 1260,391' });
draw(layer('averages'), 'polyline', { stroke: '#701838', points: '388,617 427,614 510,614 540,617 573,619 627,620 673,622 700,624 753,625 787,622 850,614 880,610 927,606 963,598 1007,590 1047,580 1073,574 1093,567 1113,555 1153,535 1173,527 1213,516 1233,508 1260,499' });

const volume = [3,5,3,4,3,3,3,2,3,4,2,3,3,3,2,2,2,3,2,2,2,3,4,3,4,3,2,3,3,2,2,3,3,3,3,2,3,3,3,2,5,6,5,4,3,3,3,2,3,4,3,3,2,3,3,3,3,4,3,4,3,3,4,4,3,7,5,3,3,3,4,4,3,3,2,3,3,3,5,5,6,4,3,3,3,4,4,7,6,5,4,3,3,4,3,3,3,4,4,3,3,2,3,2,2,3,4,4,15,8,4,4,4,4,5,8,28,34,10,7,5,4,5,7,12,8,7,13,12,8,8,6,6,5,8,8,6,4,5,6,5,5,4,4,5,6,4,4,5,4];
volume.forEach((h, i) => {
  const change = i ? h - volume[i - 1] : -1;
  const rising = change > 0 || (change === 0 && i % 2 === 0);
  draw(layer('bars'), 'rect', { x: Math.round(xAt(i)) - 3, y: 756 - h, width: 6, height: h, fill: rising ? '#d00010' : '#0000b0' });
});

/* MACD oscillator, interpolated between turning points */
const macd = [[0,3],[3,5],[6,2],[7,0],[9,-1],[12,0],[13,1],[18,2],[23,2],[25,0],[35,0],[41,-1],[43,0],[46,3],[54,3],[58,1],[60,0],[75,0],[78,1],[81,4],[84,4],[87,8],[89,7],[93,3],[98,0],[101,-3],[105,-3],[107,-1],[109,5],[112,2],[114,-1],[116,4],[120,4],[124,6],[128,12],[131,10],[134,7],[136,3],[137,-3],[141,-12],[143,-13],[146,-8],[149,-5]];
for (let i = 0; i < 150; i++) {
  const k = macd.findIndex(p => p[0] >= i), b = macd[k], a = macd[Math.max(0, k - 1)];
  const h = Math.round(b[0] === a[0] ? b[1] : a[1] + (b[1] - a[1]) * (i - a[0]) / (b[0] - a[0]));
  draw(layer('bars'), 'rect', { x: Math.round(xAt(i)) - 3, y: h > 0 ? 788 - h : 788, width: 6, height: Math.abs(h), fill: h > 0 ? '#f47878' : '#2a88d0' });
}
draw(layer('bars'), 'path', { d: 'M165 788.5H1287', stroke: '#3a8ab8' });
```
